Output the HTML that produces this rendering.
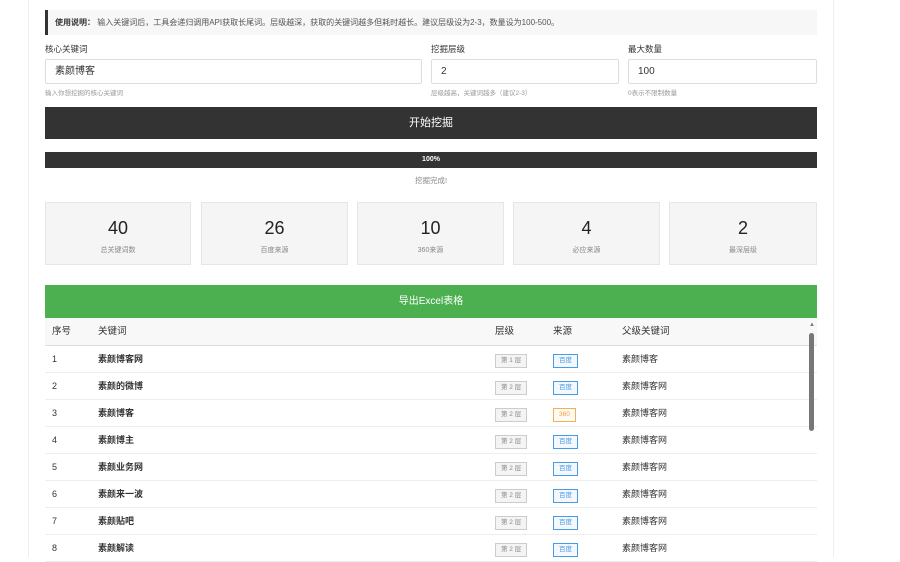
<!DOCTYPE html>
<html><head><meta charset="utf-8"><style>
*{box-sizing:border-box;margin:0;padding:0}
body{width:900px;height:557px;overflow:hidden;background:#fff;font-family:"Liberation Sans","Noto Sans CJK SC",sans-serif;color:#333;position:relative}
.wrap{position:absolute;left:28px;top:0;width:806px;height:557px;border-left:1px solid #eee;border-right:1px solid #eee}
.a{position:absolute}
.note{left:45px;top:10px;width:772px;height:25px;background:#f7f7f7;border-left:3px solid #333;font-size:8px;line-height:25px;padding-left:7px;color:#555}
.lbl{font-size:8.5px;color:#333;top:43px}
.inp{top:59px;height:25px;border:1px solid #ddd;border-radius:2px;font-size:10px;line-height:23px;padding-left:9px;color:#333}
.hint{top:87px;font-size:6.5px;color:#999}
.btn{left:45px;top:107px;width:772px;height:32px;background:#333;color:#fff;font-size:11px;text-align:center;line-height:32px}
.prog{left:45px;top:152px;width:772px;height:16px;background:#333;color:#fff;font-size:7px;font-weight:bold;text-align:center;line-height:16px}
.done{left:45px;width:772px;top:175px;text-align:center;font-size:7.5px;color:#888}
.st{top:202px;height:63px;background:#f5f5f5;border:1px solid #e6e6e6;text-align:center}
.st b{display:block;font-weight:normal;font-size:18px;margin-top:15px;color:#222}
.st span{font-size:7px;color:#888}
.green{left:45px;top:285px;width:772px;height:33px;background:#4caf50;color:#fff;font-size:10px;text-align:center;line-height:33px}
.tbl{left:45px;top:318px;width:772px}
.row{position:relative;height:27px;border-bottom:1px solid #eee;font-size:9px;line-height:27px}
.row.h{height:28px;line-height:28px;background:#f8f8f8;border-bottom:1px solid #ddd;font-size:9.5px}
.row div{position:absolute;top:0}
.c1{left:7px}.c2{left:53px;font-weight:bold}.h .c2{font-weight:normal}.c3{left:450px}.c4{left:508px}.c5{left:577px}
.lv{display:inline-block;border:1px solid #ccc;background:#f4f4f4;color:#888;font-size:6.5px;line-height:12px;padding:0 5px;font-weight:normal}
.sr{display:inline-block;border:1px solid #4a9be0;color:#4a9be0;background:#f2f8fe;font-size:6.5px;line-height:12px;padding:0 5px}
.sr.o{border-color:#f0b060;color:#f0a040;background:#fffaf2}
.sb{left:809px;top:333px;width:5px;height:98px;background:#777;border-radius:3px}
</style></head><body>
<div class="wrap"></div>
<div class="a note"><b style="color:#333">使用说明：</b> 输入关键词后，工具会递归调用API获取长尾词。层级越深，获取的关键词越多但耗时越长。建议层级设为2-3，数量设为100-500。</div>
<div class="a lbl" style="left:45px">核心关键词</div>
<div class="a lbl" style="left:431px">挖掘层级</div>
<div class="a lbl" style="left:628px">最大数量</div>
<div class="a inp" style="left:45px;width:377px">素颜博客</div>
<div class="a inp" style="left:431px;width:188px">2</div>
<div class="a inp" style="left:628px;width:189px">100</div>
<div class="a hint" style="left:45px">输入你想挖掘的核心关键词</div>
<div class="a hint" style="left:431px">层级越高，关键词越多（建议2-3）</div>
<div class="a hint" style="left:628px">0表示不限制数量</div>
<div class="a btn">开始挖掘</div>
<div class="a prog">100%</div>
<div class="a done">挖掘完成!</div>
<div class="a st" style="left:45px;width:146px"><b>40</b><span>总关键词数</span></div>
<div class="a st" style="left:201px;width:147px"><b>26</b><span>百度来源</span></div>
<div class="a st" style="left:357px;width:147px"><b>10</b><span>360来源</span></div>
<div class="a st" style="left:513px;width:147px"><b>4</b><span>必应来源</span></div>
<div class="a st" style="left:669px;width:148px"><b>2</b><span>最深层级</span></div>
<div class="a green">导出Excel表格</div>
<div class="a tbl">
<div class="row h"><div class="c1">序号</div><div class="c2">关键词</div><div class="c3">层级</div><div class="c4">来源</div><div class="c5">父级关键词</div></div>
<div class="row"><div class="c1">1</div><div class="c2">素颜博客网</div><div class="c3"><span class="lv">第 1 层</span></div><div class="c4"><span class="sr">百度</span></div><div class="c5">素颜博客</div></div>
<div class="row"><div class="c1">2</div><div class="c2">素颜的微博</div><div class="c3"><span class="lv">第 2 层</span></div><div class="c4"><span class="sr">百度</span></div><div class="c5">素颜博客网</div></div>
<div class="row"><div class="c1">3</div><div class="c2">素颜博客</div><div class="c3"><span class="lv">第 2 层</span></div><div class="c4"><span class="sr o">360</span></div><div class="c5">素颜博客网</div></div>
<div class="row"><div class="c1">4</div><div class="c2">素颜博主</div><div class="c3"><span class="lv">第 2 层</span></div><div class="c4"><span class="sr">百度</span></div><div class="c5">素颜博客网</div></div>
<div class="row"><div class="c1">5</div><div class="c2">素颜业务网</div><div class="c3"><span class="lv">第 2 层</span></div><div class="c4"><span class="sr">百度</span></div><div class="c5">素颜博客网</div></div>
<div class="row"><div class="c1">6</div><div class="c2">素颜来一波</div><div class="c3"><span class="lv">第 2 层</span></div><div class="c4"><span class="sr">百度</span></div><div class="c5">素颜博客网</div></div>
<div class="row"><div class="c1">7</div><div class="c2">素颜贴吧</div><div class="c3"><span class="lv">第 2 层</span></div><div class="c4"><span class="sr">百度</span></div><div class="c5">素颜博客网</div></div>
<div class="row"><div class="c1">8</div><div class="c2">素颜解读</div><div class="c3"><span class="lv">第 2 层</span></div><div class="c4"><span class="sr">百度</span></div><div class="c5">素颜博客网</div></div>
</div>
<div class="a" style="left:809px;top:322px;font-size:6px;color:#777">▲</div>
<div class="a sb"></div>
</body></html>
